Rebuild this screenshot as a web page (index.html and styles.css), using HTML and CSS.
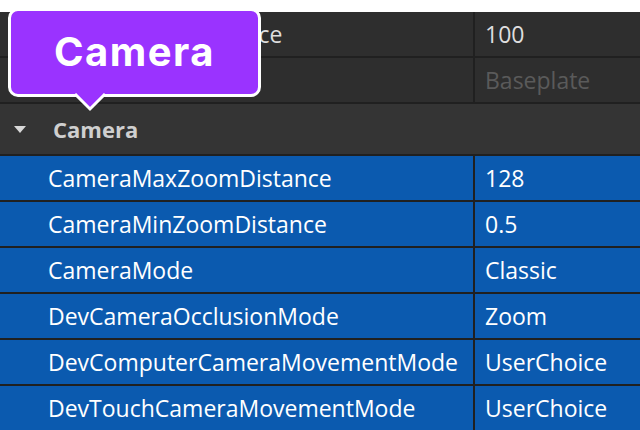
FILE: index.html
```html
<!DOCTYPE html>
<html>
<head>
<meta charset="utf-8">
<link rel="stylesheet" href="styles.css">
</head>
<body>
<div class="panel">
  <div class="cell name dark">NameDisplayDistance</div>
  <div class="cell value dark">100</div>
  <div class="cell name dark">Parent</div>
  <div class="cell value dark dim">Baseplate</div>
  <div class="category">
    <svg class="caret" width="12" height="7" viewBox="0 0 12 7"><path d="M0 0H12L6 7Z" fill="#d8d8d8"/></svg>
    <span class="cat-label">Camera</span>
  </div>
  <div class="cell name sel">CameraMaxZoomDistance</div>
  <div class="cell value sel">128</div>
  <div class="cell name sel">CameraMinZoomDistance</div>
  <div class="cell value sel">0.5</div>
  <div class="cell name sel">CameraMode</div>
  <div class="cell value sel">Classic</div>
  <div class="cell name sel">DevCameraOcclusionMode</div>
  <div class="cell value sel">Zoom</div>
  <div class="cell name sel">DevComputerCameraMovementMode</div>
  <div class="cell value sel">UserChoice</div>
  <div class="cell name sel">DevTouchCameraMovementMode</div>
  <div class="cell value sel">UserChoice</div>
</div>
<div class="tooltip">
  <div class="tip-box">Camera</div>
  <svg class="tip-tail" width="40" height="22" viewBox="0 0 40 22"><path d="M5 1L20 16L35 1" fill="#9a33ff" stroke="#ffffff" stroke-width="3" stroke-linejoin="miter"/></svg>
</div>
</body>
</html>
```
FILE: styles.css
```css
html, body {
  margin: 0;
  padding: 0;
}
body {
  background: #ffffff;
  width: 640px;
  height: 430px;
  overflow: hidden;
  position: relative;
  padding-top: 12px;
  box-sizing: border-box;
  font-family: "Open Sans", "Noto Sans", sans-serif;
}
.panel {
  display: grid;
  grid-template-columns: 473px 1fr;
  grid-template-rows: 44px 44px 50px repeat(6, 44px);
  gap: 2px;
  background: #202020;
}
.cell {
  display: flex;
  align-items: center;
  font-size: 23px;
  white-space: nowrap;
  overflow: hidden;
}
.name {
  padding-left: 48px;
}
.value {
  padding-left: 10px;
}
.dark {
  background: #2e2e2e;
  color: #dedede;
}
.dim {
  color: #5a5a5a;
}
.sel {
  background: #0b5aaf;
  color: #ffffff;
}
.category {
  grid-column: 1 / -1;
  background: #343434;
  display: flex;
  align-items: center;
  padding-left: 14px;
  gap: 27px;
}
.caret {
  display: block;
}
.cat-label {
  font-size: 22px;
  font-weight: 700;
  color: #cfcfcf;
}
.tooltip {
  position: absolute;
  left: 8px;
  top: 8px;
  width: 253px;
}
.tip-box {
  box-sizing: border-box;
  height: 89px;
  padding-bottom: 2px;
  border: 3px solid #ffffff;
  border-radius: 10px;
  background: #9a33ff;
  color: #ffffff;
  font-family: "Inter", "Noto Sans", sans-serif;
  font-weight: 700;
  font-size: 40px;
  letter-spacing: 1.5px;
  display: flex;
  align-items: center;
  justify-content: center;
}
.tip-tail {
  position: absolute;
  left: 62px;
  top: 85px;
}
```
